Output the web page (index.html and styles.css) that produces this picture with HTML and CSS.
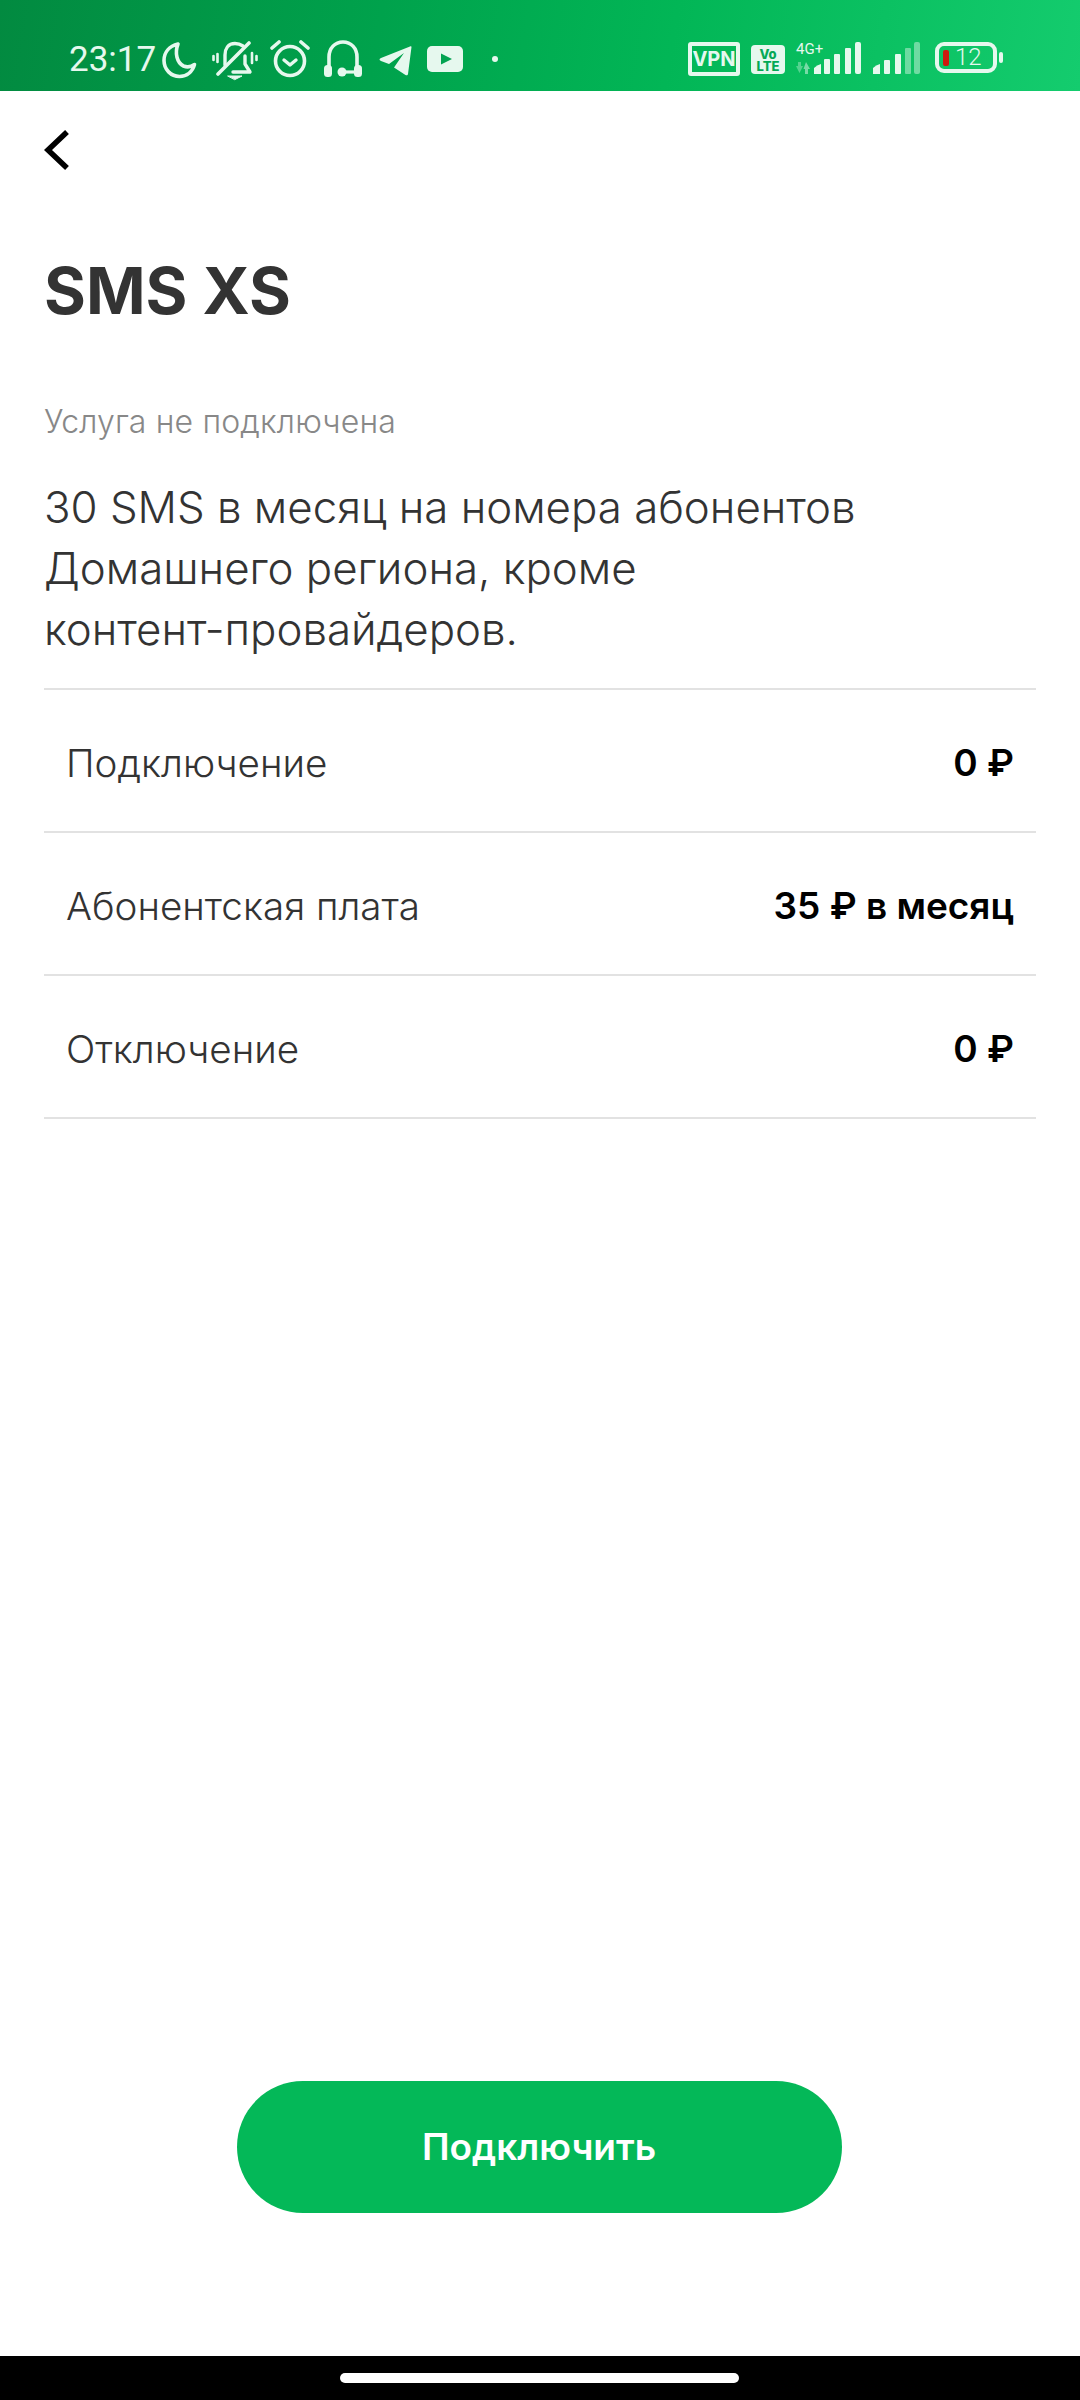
FILE: index.html
```html
<!DOCTYPE html>
<html lang="ru">
<head>
<meta charset="utf-8">
<title>SMS XS</title>
<link rel="stylesheet" href="styles.css">
</head>
<body>
<div class="screen">
  <header class="status">
    <div class="status-left">
      <span class="time">23:17</span>
      <svg class="i-moon" width="36" height="38" viewBox="0 0 36 38"><path d="M17 3C8.500 5 3 11 3 19.500 3 28.500 10 35.500 18.500 35.500 26 35.500 31.500 30.500 33.500 23.500 30 26 26 26.500 22.500 25 16 22 13.500 12 17 3Z" fill="none" stroke="currentColor" stroke-width="3.600" stroke-linejoin="round"/></svg>
      <svg class="i-bell" width="46" height="40" viewBox="0 0 46 40" fill="none" stroke="currentColor" stroke-linecap="round" stroke-linejoin="round"><path d="M31 5C28 3 26 2.500 23 2.500 16 2.500 13 8 13 14V24M33 15V23L38 31H21" stroke-width="3.400"/><path d="M37 2 6 33" stroke-width="3.600"/><path d="M5.500 13V21M1.500 15V19M40 12V22M44.500 15V19" stroke-width="2.600"/><path d="M16 35H30L23 38.500Z" fill="currentColor" stroke-width="1"/></svg>
      <svg class="i-alarm" width="40" height="38" viewBox="0 0 40 38" fill="none" stroke="currentColor" stroke-linecap="round" stroke-linejoin="round"><circle cx="20" cy="21" r="14.500" stroke-width="3.600"/><path d="M14 20 20 25 26 20" stroke-width="3.400"/><path d="M2 8 9 2M38 8 31 2" stroke-width="3.600"/></svg>
      <svg class="i-head" width="38" height="38" viewBox="0 0 38 38" fill="none"><path d="M5 27V17C5 8 11 2 19 2 27 2 33 8 33 17V27" stroke="currentColor" stroke-width="3.600"/><rect x="0" y="25" width="8" height="12" rx="3.500" fill="currentColor"/><rect x="30" y="25" width="8" height="12" rx="3.500" fill="currentColor"/><circle cx="18" cy="32" r="4.500" fill="currentColor"/><path d="M18 32H32" stroke="currentColor" stroke-width="3.200"/></svg>
      <svg class="i-tg" width="33" height="30" viewBox="0 0 33 30"><path d="M32.500 1 29 28C28.800 29.500 27.500 29.500 26.500 29L15 21.500 25 7 10 18 2 15C0 14.200 0 12.800 2 12L31 .5C32 .2 32.700 .4 32.500 1Z" fill="currentColor"/></svg>
      <svg class="i-yt" width="36" height="26" viewBox="0 0 36 26"><rect width="36" height="26" rx="5" fill="currentColor"/><path d="M14 7.500 25 13 14 18.500Z" fill="#03a351"/></svg>
      <span class="dot"></span>
    </div>
    <div class="status-right">
      <span class="vpn">VPN</span>
      <span class="volte"><b>Vo</b><b>LTE</b></span>
      <span class="net">
        <span class="net-label">4G+</span>
        <svg width="14" height="12" viewBox="0 0 14 12" class="arrows"><path d="M5 0V4H7L3.500 11 0 4H2V0Z" fill="currentColor" opacity=".35"/><path d="M9 12V7H7.500L10 0 14 7H12V12Z" fill="currentColor" opacity=".5"/></svg>
      </span>
      <svg class="bars bars-a" width="47" height="32" viewBox="0 0 47 32" fill="currentColor"><path d="M0 26Q3 23 7 22V32H0Z"/><rect x="10" y="17" width="6" height="15" rx="1"/><rect x="20" y="12" width="6" height="20" rx="1"/><rect x="31" y="6" width="6" height="26" rx="1"/><rect x="41" y="0" width="6" height="32" rx="2"/></svg>
      <svg class="bars bars-b" width="47" height="32" viewBox="0 0 47 32" fill="currentColor"><path d="M0 26Q3 23 7 22V32H0Z"/><rect x="11" y="18" width="6" height="14" rx="1"/><rect x="22" y="12" width="6" height="20" rx="1"/><rect x="32" y="6" width="6" height="26" rx="1" opacity=".45"/><rect x="41" y="0" width="6" height="32" rx="2" opacity=".45"/></svg>
      <span class="battery"><span class="level"></span><span class="pct">12</span></span>
      <span class="tip"></span>
    </div>
  </header>

  <main class="content">
    <button class="back" aria-label="Назад">
      <svg width="26" height="42" viewBox="0 0 26 42"><path d="M23 3 4 21 23 39" fill="none" stroke="#000" stroke-width="5.500"/></svg>
    </button>
    <h1 class="title">SMS XS</h1>
    <p class="state">Услуга не подключена</p>
    <p class="desc">30 SMS в месяц на номера абонентов<br>Домашнего региона, кроме<br>контент-провайдеров.</p>
    <ul class="rows">
      <li class="row"><span>Подключение</span><strong>0 ₽</strong></li>
      <li class="row"><span>Абонентская плата</span><strong>35 ₽ в месяц</strong></li>
      <li class="row"><span>Отключение</span><strong>0 ₽</strong></li>
    </ul>
    <div class="action"><button class="connect">Подключить</button></div>
  </main>

  <footer class="nav"><span class="pill"></span></footer>
</div>
</body>
</html>
```
FILE: styles.css
```css
* { box-sizing: border-box; }
html, body { margin: 0; padding: 0; background: #fff; }
.screen {
  width: 1080px;
  height: 2400px;
  display: flex;
  flex-direction: column;
  font-family: Inter, "Liberation Sans", sans-serif;
  color: #333;
  overflow: hidden;
}
.status {
  height: 91px;
  flex: none;
  display: flex;
  justify-content: space-between;
  align-items: flex-start;
  color: #e6f8ee;
  background: linear-gradient(100deg, #028a40 0%, #00a24c 35%, #02b656 62%, #14cc6e 100%);
  padding: 40px 0 0 69px;
}
.status-left { display: flex; align-items: flex-start; }
.time {
  font: 400 35px/40px Roboto, sans-serif;
  width: 88px;
}
.i-moon { margin: 1px 0 0 4px; }
.i-bell { margin: 1px 0 0 15px; }
.i-alarm { margin: 0 0 0 12px; }
.i-head { margin: 0 0 0 14px; }
.i-tg { margin: 6px 0 0 17px; }
.i-yt { margin: 6px 0 0 15px; }
.dot { width: 6px; height: 6px; border-radius: 50%; background: currentColor; margin: 16px 0 0 29px; }
.status-right { display: flex; align-items: flex-start; margin-right: 77px; margin-top: 2px; }
.vpn {
  width: 52px; height: 34px; border: 4px solid currentColor; border-radius: 3px;
  font: 700 20px/26px Inter, sans-serif; text-align: center;
}
.volte {
  width: 34px; height: 29px; margin: 3px 0 0 11px; background: currentColor; border-radius: 4px;
  display: flex; flex-direction: column; align-items: center; justify-content: center;
}
.volte b { font: 800 13px/12px Inter, sans-serif; color: #05a956; }
.net { width: 29px; height: 32px; margin-left: 11px; display: flex; flex-direction: column; }
.net-label { font: 400 15px/14px Roboto, sans-serif; white-space: nowrap; }
.arrows { margin-top: 6px; }
.bars-a { margin: 0 0 0 -11px; }
.bars-b { margin: 0 0 0 12px; }
.battery {
  width: 62px; height: 31px; margin-left: 15px; border: 4px solid currentColor; border-radius: 9px;
  display: flex; align-items: center; padding-left: 4px;
}
.level { width: 6px; height: 16px; background: #cf1a0f; border-radius: 2px; }
.pct { font: 300 24px/23px Roboto, sans-serif; margin-left: 6px; }
.tip { width: 4px; height: 11px; margin: 10px 0 0 2px; background: currentColor; border-radius: 2px; }

.content {
  flex: 1;
  display: flex;
  flex-direction: column;
  padding: 0 44px;
  min-height: 0;
}
.back {
  border: 0; background: none; padding: 0; width: 26px; height: 42px;
  margin: 38px 0 0 0; display: block;
}
.back svg { display: block; }
.title {
  margin: 84px 0 0; font: 700 64px/72px Inter, sans-serif; color: #333;
}
.state {
  margin: 77px 0 0; font-size: 32px; line-height: 36px; color: #888; font-weight: 300; letter-spacing: .15px;
}
.desc {
  margin: 37px 0 0; font-size: 43.800px; line-height: 61px; color: #333; font-weight: 300;
}
.rows { list-style: none; margin: 28px 0 0; padding: 0; border-top: 2px solid #e2e2e2; }
.row {
  height: 143px; border-bottom: 2px solid #e2e2e2;
  display: flex; justify-content: space-between; align-items: center;
  padding: 4px 22px 0; font-size: 38.600px; font-weight: 300; color: #333;
}
.row strong { font-size: 37px; font-weight: 600; color: #000; }
.action { margin-top: auto; display: flex; justify-content: center; padding: 0 2px 143px 0; }
.connect {
  width: 605px; height: 132px; border: 0; border-radius: 66px; background: #04b858; color: #fff;
  font: 600 37px/40px Inter, sans-serif;
}
.nav { height: 44px; flex: none; background: #000; display: flex; justify-content: center; padding: 17px 2px 0 0; }
.pill { width: 399px; height: 10px; border-radius: 5px; background: #fff; }
```
